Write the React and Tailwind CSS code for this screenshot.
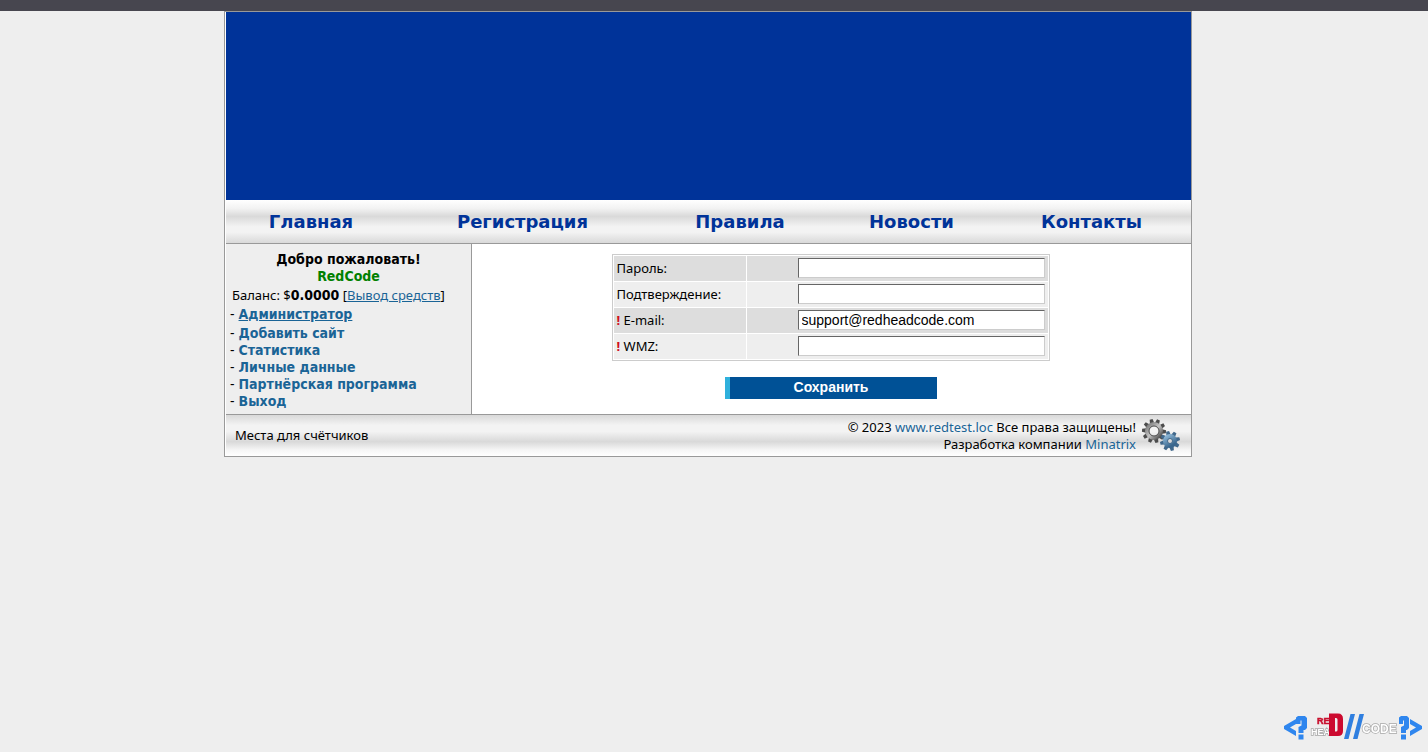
import { useState } from 'react';

const navLinks = ['Главная', 'Регистрация', 'Правила', 'Новости', 'Контакты'];

const userLinks = ['Добавить сайт', 'Статистика', 'Личные данные', 'Партнёрская программа', 'Выход'];

const fields = [
  { name: 'password', label: 'Пароль:', type: 'password', required: false },
  { name: 'confirm', label: 'Подтверждение:', type: 'password', required: false },
  { name: 'email', label: 'E-mail:', type: 'text', required: true },
  { name: 'wmz', label: 'WMZ:', type: 'text', required: true },
];

const Gear = ({ cx, cy, r, hole, teeth, fill, toothFill }) => (
  <g transform={`translate(${cx} ${cy})`}>
    {Array.from({ length: teeth }, (_, i) => (
      <path
        key={i}
        d={`M-2.200 ${-r + 1}L-1.500 ${-r - 3}H1.500L2.200 ${-r + 1}Z`}
        fill={toothFill}
        transform={`rotate(${(360 / teeth) * i - 14})`}
      />
    ))}
    <circle r={(r + hole) / 2} fill="none" stroke={fill} strokeWidth={r - hole} />
    <circle r={hole} fill="none" stroke={toothFill} strokeWidth="1" />
  </g>
);

const Gears = () => (
  <svg width="40" height="36" viewBox="0 0 40 36" aria-hidden="true">
    <defs>
      <linearGradient id="steel" x1="0" y1="0" x2="1" y2="1">
        <stop offset="0" stopColor="#777" />
        <stop offset="0.5" stopColor="#c4c4c4" />
        <stop offset="1" stopColor="#444" />
      </linearGradient>
      <linearGradient id="blue" x1="0" y1="0" x2="0.600" y2="1">
        <stop offset="0" stopColor="#8db7d6" />
        <stop offset="1" stopColor="#3a678e" />
      </linearGradient>
    </defs>
    <Gear cx={13} cy={13} r={9} hole={5} teeth={10} fill="url(#steel)" toothFill="#4c4c4c" />
    <Gear cx={29} cy={23} r={7} hole={2.5} teeth={8} fill="url(#blue)" toothFill="#41688b" />
  </svg>
);

const Logo = () => (
  <svg width="138" height="30" viewBox="0 0 138 30" role="img" aria-label="RedHead//Code">
    <g fill="#2f86ee">
      <path d="M12 7V12L6 15.500 12 19V24L0 17V14Z" />
      <path d="M12 5.500 14 4H21L23 6V16L21 18H19.500V21H14.500V15L17.500 13.500V8.500H16.500V12H12ZM14.500 22.500H19.500V27.500H14.500Z" />
      <path d="M126 7V12L132 15.500 126 19V24L138 17V14Z" />
      <path d="M115 5.500 117 4H123L125 6V16L123 18H122V21H117V15L120 13.500V8.500H119V12H115ZM117 22.500H122V27.500H117Z" />
    </g>
    <g fontFamily="'Liberation Sans', sans-serif" fontWeight="bold">
      <text x="33" y="12" fontSize="9" fill="#c8102e" stroke="#c8102e" strokeWidth="0.500">RE</text>
      <g fill="#fff" stroke="#a8a8a8" strokeWidth="1.500" paintOrder="stroke">
        <text x="27" y="23" fontSize="9">HEA</text>
        <text x="78" y="21" fontSize="12">CODE</text>
      </g>
    </g>
    <path fillRule="evenodd" fill="#cc0a2f" d="M45 1.500H54Q59 1.500 59 7V19Q59 24 54 24H45ZM51 6V19.500H52Q53.500 19.500 53.500 18V7.500Q53.500 6 52 6Z" />
    <path d="M60 27 66.500 2H71L64.500 27ZM69 27 75.500 2H80L73.500 27Z" fill="#2f7fe0" />
  </svg>
);

const NavBar = () => (
  <nav className="grid h-11 grid-cols-[170fr_253fr_182fr_161fr_199fr] items-center border-b border-[#999] bg-[linear-gradient(#fff_0%,#f2f2f2_20%,#d9d9d9_38%,#f3f3f3_62%,#f3f3f3_75%,#d9d9d9_100%)] text-center font-['DejaVu_Sans',sans-serif] text-lg font-bold text-[#003399]">
    {navLinks.map((link) => (
      <a key={link} href="#">{link}</a>
    ))}
  </nav>
);

const Sidebar = () => (
  <aside className="w-[246px] shrink-0 border-r border-[#999] bg-[#eee] px-1 pt-[7px] pb-[3px] font-['DejaVu_Sans_Condensed','DejaVu_Sans',sans-serif] text-sm leading-[17px]">
    <div className="text-center font-bold">
      Добро пожаловать!
      <div className="text-[#008000]">RedCode</div>
    </div>
    <p className="mt-0.5 px-0.5 font-['Noto_Sans',sans-serif] text-[13px] leading-[17px]">
      Баланс: $<b className="font-['DejaVu_Sans_Condensed','DejaVu_Sans',sans-serif] text-sm leading-4">0.0000</b> [<a href="#" className="text-[#1a6496] underline">Вывод средств</a>]
    </p>
    <p className="mt-0.5">
      - <a href="#" className="font-bold text-[#1a6496] underline">Администратор</a>
    </p>
    <ul className="mt-0.5">
      {userLinks.map((link) => (
        <li key={link}>
          - <a href="#" className="font-bold text-[#1a6496]">{link}</a>
        </li>
      ))}
    </ul>
  </aside>
);

const ProfileForm = () => {
  const [values, setValues] = useState({ password: '', confirm: '', email: 'support@redheadcode.com', wmz: '' });

  const handleChange = (e) => {
    setValues((prev) => ({ ...prev, [e.target.name]: e.target.value }));
  };

  return (
    <form className="flex flex-1 flex-col items-center gap-4 bg-white pt-2.5 pr-0.5" onSubmit={(e) => e.preventDefault()}>
      <table className="w-[438px] border-separate border-spacing-px border border-[#ccc]">
        <tbody>
          {fields.map((field) => (
            <tr key={field.name} className="h-[25px] odd:bg-[#ddd] even:bg-[#eee]">
              <td className="w-[132px] px-[3px] py-0">
                <label htmlFor={field.name}>
                  {field.required && <b className="text-[#d01020]">! </b>}
                  {field.label}
                </label>
              </td>
              <td className="px-[3px] pt-0 pb-px">
                <input
                  id={field.name}
                  name={field.name}
                  type={field.type}
                  value={values[field.name]}
                  onChange={handleChange}
                  className="ml-auto block h-5 w-[247px] border border-t-[#666] border-r-[#ccc] border-b-[#ccc] border-l-[#666] bg-white px-[3px] font-['Liberation_Sans',sans-serif] text-sm leading-4 outline-none"
                />
              </td>
            </tr>
          ))}
        </tbody>
      </table>
      <button
        type="submit"
        className="h-[22px] w-[212px] border-l-[5px] border-[#2fb0dc] bg-[#005196] pr-1 pb-0.5 font-['Liberation_Sans',sans-serif] text-sm leading-5 font-bold text-white"
      >
        Сохранить
      </button>
    </form>
  );
};

const Footer = () => (
  <footer className="flex h-[42px] items-center justify-between border-t border-[#999] bg-[linear-gradient(#d9d9d9_0%,#f3f3f3_25%,#f3f3f3_40%,#d9d9d9_65%,#f5f5f5_85%,#fff_100%)] pr-2.5 pl-[9px]">
    <span>Места для счётчиков</span>
    <div className="flex items-center gap-[5px]">
      <div className="text-right">
        © 2023 <a href="#" className="text-[#1a6496]">www.redtest.loc</a> Все права защищены!
        <br />
        Разработка компании <a href="#" className="text-[#1a6496]">Minatrix</a>
      </div>
      <Gears />
    </div>
  </footer>
);

const App = () => {
  return (
    <div className="min-h-screen bg-[#eee] font-['Noto_Sans',sans-serif] text-[13px] leading-[17px] text-black">
      <div className="h-[11px] bg-[#47464f]" />
      <div className="pr-3">
        <main className="mx-auto w-full max-w-[968px] border border-[#999] bg-white pl-px">
          <header className="h-[188px] bg-[#003399]" />
          <NavBar />
          <div className="flex min-h-[170px]">
            <Sidebar />
            <ProfileForm />
          </div>
          <Footer />
        </main>
      </div>
      <a href="#" className="fixed right-1.5 bottom-2.5">
        <Logo />
      </a>
    </div>
  );
};

export default App;
